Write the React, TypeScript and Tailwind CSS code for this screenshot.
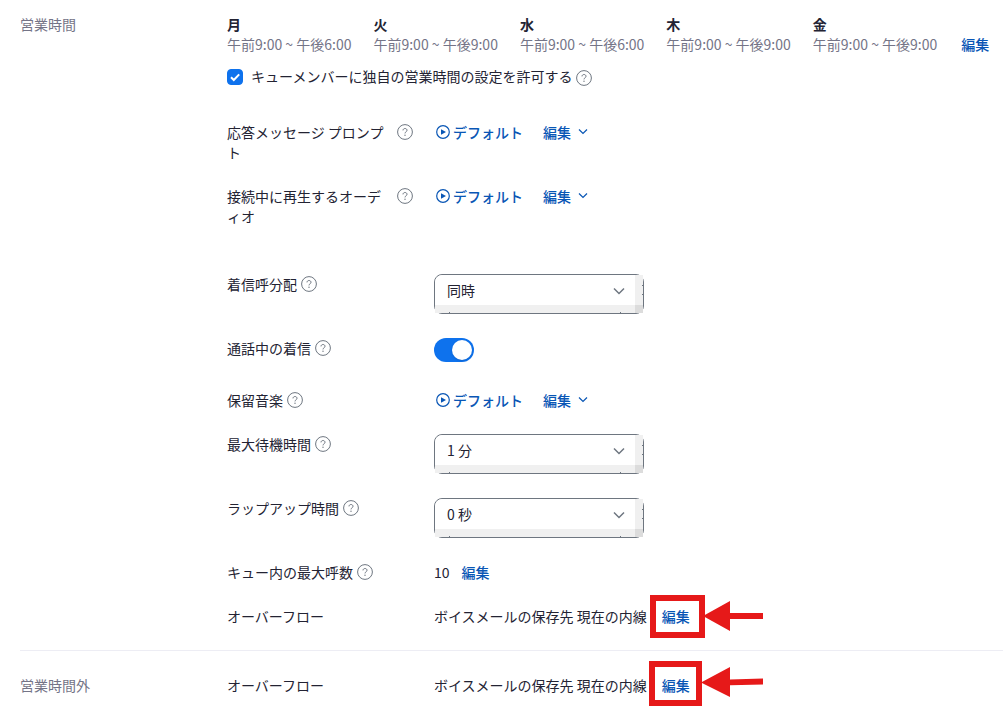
import { useState } from "react";
import type { ReactNode } from "react";

function HelpButton() {
  return (
    <button type="button" aria-label="ヘルプ" className="flex h-5 shrink-0 items-center">
      <svg className="size-4 shrink-0 text-[#6e7680]" viewBox="0 0 16 16" fill="none" stroke="currentColor" aria-hidden="true">
        <circle cx="8" cy="8" r="7.4" />
        <path d="M6 6.4C6 5.2 6.9 4.5 8 4.5s2 .7 2 1.8c0 1.5-2 1.5-2 3.1" />
        <circle cx="8" cy="11.3" r="0.7" fill="currentColor" stroke="none" />
      </svg>
    </button>
  );
}

function EditLink({ children }: { children?: ReactNode }) {
  return (
    <span className="relative flex shrink-0">
      <a href="#edit" className="font-medium text-[#0956b5]">編集</a>
      {children}
    </span>
  );
}

function Row({ label, help, children }: { label: string; help?: boolean; children: ReactNode }) {
  return (
    <div className="flex items-start">
      <div className="flex w-[207px] shrink-0 gap-1 pr-[21px]">
        <span>{label}</span>
        {help && <HelpButton />}
      </div>
      {children}
    </div>
  );
}

function AudioControls() {
  return (
    <div className="flex gap-5 text-[#0956b5]">
      <button type="button" className="flex items-center gap-[3px] pl-0.5 font-medium">
        <svg className="size-[14px]" viewBox="0 0 14 14" fill="none" stroke="currentColor" aria-hidden="true">
          <circle cx="7" cy="7" r="6.3" strokeWidth="1.2" />
          <path d="M5 4.2 10 7l-5 2.8z" fill="currentColor" stroke="none" />
        </svg>
        デフォルト
      </button>
      <button type="button" className="flex items-center gap-[7px] font-medium">
        編集
        <svg className="h-2 w-[10px]" viewBox="0 0 10 8" fill="none" stroke="currentColor" strokeWidth="1.2" aria-hidden="true">
          <path d="m1 1.5 4 4 4-4" />
        </svg>
      </button>
    </div>
  );
}

function SelectBox({ label, options }: { label: string; options: string[] }) {
  return (
    <div className="relative grid h-10 w-[210px] grid-cols-[1fr_8px] grid-rows-[1fr_8px] rounded-lg border border-[#6e7680]">
      <select aria-label={label} className="w-full appearance-none rounded-tl-lg bg-white pl-3 text-[#232333] outline-none">
        {options.map((o) => (
          <option key={o}>{o}</option>
        ))}
      </select>
      <div className="flex flex-col items-end gap-2 bg-[#f0f0f0] pt-[10px]">
        <span className="size-px bg-[#6e7680]" />
        <span className="size-px bg-[#6e7680]" />
      </div>
      <div className="flex items-end justify-between bg-[#f0f0f0] px-[14px]">
        <span className="size-px bg-[#6e7680]" />
        <span className="size-px bg-[#6e7680]" />
      </div>
      <div className="bg-[#dcdcdc]" />
      <svg className="pointer-events-none absolute top-3 right-[18px] h-2 w-3 text-[#6e7680]" viewBox="0 0 12 8" fill="none" stroke="currentColor" strokeWidth="1.5" aria-hidden="true">
        <path d="m1 1.5 5 5 5-5" />
      </svg>
    </div>
  );
}

const hours = [
  { day: "月", time: "午前9:00 ~ 午後6:00" },
  { day: "火", time: "午前9:00 ~ 午後9:00" },
  { day: "水", time: "午前9:00 ~ 午後6:00" },
  { day: "木", time: "午前9:00 ~ 午後9:00" },
  { day: "金", time: "午前9:00 ~ 午後9:00" },
];

export default function App() {
  const [allow, setAllow] = useState(true);
  const [waiting, setWaiting] = useState(true);
  return (
    <main className="bg-white pl-5 font-['Noto_Sans_CJK_JP',sans-serif] text-sm leading-5 text-[#232333]">
      <section className="flex border-b border-[#ededf4] pt-[14px] pb-6">
        <h2 className="w-[207px] shrink-0 text-[#747487]">営業時間</h2>
        <div className="flex-1">
          <div className="flex items-end gap-6 whitespace-nowrap">
            <div className="flex gap-[22px]">
              {hours.map((h) => (
                <div key={h.day}>
                  <div className="font-bold">{h.day}</div>
                  <div className="text-[#747487]">{h.time}</div>
                </div>
              ))}
            </div>
            <EditLink />
          </div>
          <div className="mt-3 flex items-start gap-1">
            <label className="flex items-start gap-2">
              <span className="relative mt-[3px] flex size-4">
                <input
                  type="checkbox"
                  checked={allow}
                  onChange={(e) => setAllow(e.target.checked)}
                  className="size-4 appearance-none rounded border border-[#0e72ed] checked:bg-[#0e72ed]"
                />
                <svg className="pointer-events-none absolute inset-0 size-4" viewBox="0 0 16 16" fill="none" stroke="white" strokeWidth="2" aria-hidden="true">
                  <path d="m4 8.2 2.8 2.8L12.2 5.4" />
                </svg>
              </span>
              キューメンバーに独自の営業時間の設定を許可する
            </label>
            <span className="pt-0.5">
              <HelpButton />
            </span>
          </div>

          <div className="mt-[34px] flex flex-col gap-6">
            <Row label="応答メッセージ プロンプト" help>
              <AudioControls />
            </Row>
            <Row label="接続中に再生するオーディオ" help>
              <AudioControls />
            </Row>
            <div className="mt-6">
              <Row label="着信呼分配" help>
                <SelectBox label="着信呼分配" options={["同時"]} />
              </Row>
            </div>
            <div className="pb-1">
              <Row label="通話中の着信" help>
                <label className="relative flex h-6 w-10">
                  <input
                    type="checkbox"
                    role="switch"
                    aria-label="通話中の着信"
                    checked={waiting}
                    onChange={(e) => setWaiting(e.target.checked)}
                    className="peer h-6 w-10 appearance-none rounded-full bg-[#747487] checked:bg-[#0e72ed]"
                  />
                  <span className="pointer-events-none absolute top-0.5 left-0.5 size-5 rounded-full bg-white shadow-sm peer-checked:left-[18px]" />
                </label>
              </Row>
            </div>
            <Row label="保留音楽" help>
              <AudioControls />
            </Row>
            <Row label="最大待機時間" help>
              <SelectBox label="最大待機時間" options={["1 分"]} />
            </Row>
            <Row label="ラップアップ時間" help>
              <SelectBox label="ラップアップ時間" options={["0 秒"]} />
            </Row>
            <Row label="キュー内の最大呼数" help>
              <div className="flex gap-3">
                <span>10</span>
                <EditLink />
              </div>
            </Row>
            <Row label="オーバーフロー">
              <div className="flex gap-[15px]">
                <span>ボイスメールの保存先 現在の内線</span>
                <EditLink>
                  <span className="pointer-events-none absolute -top-[11px] -left-3 h-[43px] w-[55px] border-6 border-[#e61919]" />
                  <svg className="pointer-events-none absolute -top-[5px] left-[41px] h-[30px] w-[60px]" viewBox="0 0 60 30" fill="#e61919" aria-hidden="true">
                    <path d="M0 15 27 0v12h33v6H27v12z" />
                  </svg>
                </EditLink>
              </div>
            </Row>
          </div>
        </div>
      </section>
      <section className="flex pt-6 pb-[11px]">
        <h2 className="w-[207px] shrink-0 text-[#747487]">営業時間外</h2>
        <Row label="オーバーフロー">
          <div className="flex gap-[15px]">
            <span>ボイスメールの保存先 現在の内線</span>
            <EditLink>
              <span className="pointer-events-none absolute -top-[14px] -left-[13px] h-[45px] w-[53px] border-6 border-[#e61919]" />
              <svg className="pointer-events-none absolute -top-2 left-[39px] h-[30px] w-[62px]" viewBox="0 0 62 30" fill="#e61919" aria-hidden="true">
                <path d="M0 15.5 29 0v12.4L62 11.6v6L29 18.2V30z" />
              </svg>
            </EditLink>
          </div>
        </Row>
      </section>
    </main>
  );
}
